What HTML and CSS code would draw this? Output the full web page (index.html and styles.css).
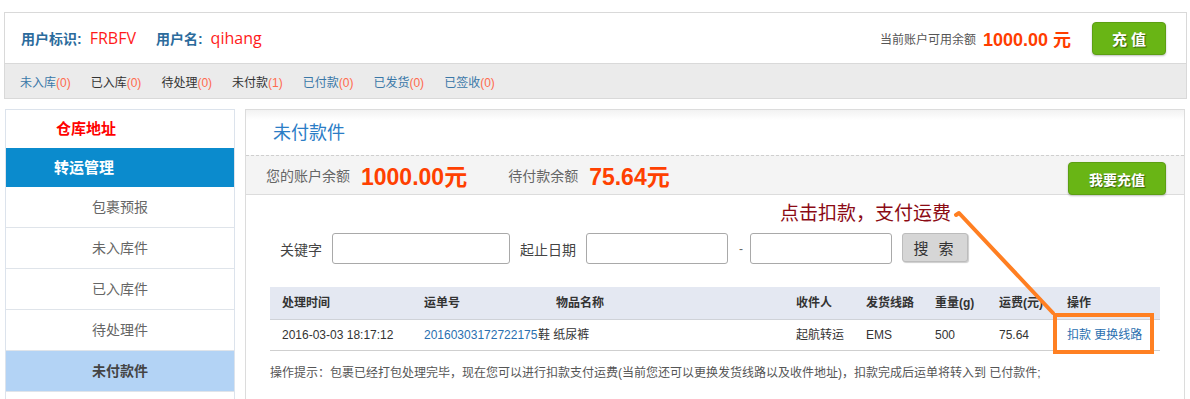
FILE: index.html
```html
<!DOCTYPE html>
<html lang="zh-CN">
<head>
<meta charset="utf-8">
<title>未付款件</title>
<link rel="stylesheet" href="styles.css">
</head>
<body>
<div class="top">
  <div class="top-row">
    <div class="user">
      <span class="lbl">用户标识:</span><span class="val">FRBFV</span>
      <span class="lbl lbl2">用户名:</span><span class="val">qihang</span>
    </div>
    <div class="balance">
      <span class="bal-lbl">当前账户可用余额</span>
      <span class="bal-amt">1000.00 元</span>
      <a class="btn-green btn-top">充 值</a>
    </div>
  </div>
  <div class="nav">
    <a class="nv blue">未入库<span class="cnt">(0)</span></a>
    <a class="nv">已入库<span class="cnt">(0)</span></a>
    <a class="nv">待处理<span class="cnt">(0)</span></a>
    <a class="nv">未付款<span class="cnt">(1)</span></a>
    <a class="nv blue">已付款<span class="cnt">(0)</span></a>
    <a class="nv blue">已发货<span class="cnt">(0)</span></a>
    <a class="nv blue">已签收<span class="cnt">(0)</span></a>
  </div>
</div>

<div class="content">
  <div class="side">
    <div class="side-title">仓库地址</div>
    <div class="side-head">转运管理</div>
    <div class="side-item">包裹预报</div>
    <div class="side-item">未入库件</div>
    <div class="side-item">已入库件</div>
    <div class="side-item">待处理件</div>
    <div class="side-item active">未付款件</div>
    <div class="side-item">&nbsp;</div>
  </div>

  <div class="main">
    <div class="main-title">未付款件</div>
    <div class="bar">
      <span class="bar-lbl">您的账户余额</span>
      <span class="bar-amt">1000.00元</span>
      <span class="bar-lbl bar-lbl2">待付款余额</span>
      <span class="bar-amt">75.64元</span>
      <a class="btn-green btn-bar">我要充值</a>
    </div>

    <div class="search">
      <span class="s-lbl">关键字</span>
      <span class="inp inp-key"></span>
      <span class="s-lbl">起止日期</span>
      <span class="inp inp-date"></span>
      <span class="dash">-</span>
      <span class="inp inp-date"></span>
      <span class="btn-search">搜 索</span>
    </div>

    <div class="tbl">
      <div class="th">处理时间</div>
      <div class="th">运单号</div>
      <div class="th th-item">物品名称</div>
      <div class="th">收件人</div>
      <div class="th">发货线路</div>
      <div class="th">重量(g)</div>
      <div class="th">运费(元)</div>
      <div class="th">操作</div>

      <div class="td">2016-03-03 18:17:12</div>
      <div class="td link nowrap">20160303172722175</div>
      <div class="td td-item">鞋 纸尿裤</div>
      <div class="td">起航转运</div>
      <div class="td">EMS</div>
      <div class="td">500</div>
      <div class="td">75.64</div>
      <div class="td link">扣款 更换线路</div>
    </div>

    <div class="hint">操作提示：包裹已经打包处理完毕，现在您可以进行扣款支付运费(当前您还可以更换发货线路以及收件地址)，扣款完成后运单将转入到 已付款件;</div>

    <div class="note">点击扣款，支付运费</div>
    <svg class="arrow" width="110" height="110" viewBox="0 0 110 110">
      <path d="M4 6 L7 4 L101 104" fill="none" stroke="#ff7f22" stroke-width="4" stroke-linecap="round" stroke-linejoin="round"/>
    </svg>
    <div class="hl"></div>
  </div>
</div>
</body>
</html>
```

FILE: styles.css
```css
* { box-sizing: border-box; }
body {
  margin: 0;
  background: #fff;
  font-family: "Liberation Sans", "Noto Sans CJK SC", sans-serif;
  font-size: 12px;
  color: #333;
}
a { text-decoration: none; cursor: pointer; }

.top {
  margin: 12px 0 0 4px;
  width: 1183px;
  border: 1px solid #d9d9d9;
}
.top-row {
  height: 50px;
  display: flex;
  align-items: center;
  justify-content: space-between;
  padding: 0 20px 0 16px;
  background: #fff;
}
.user { display: flex; align-items: center; }
.lbl { font-size: 14px; font-weight: bold; color: #2b6b9c; }
.lbl2 { margin-left: 20px; }
.val {
  font-family: "Open Sans", "Liberation Sans", sans-serif;
  font-size: 16px;
  color: #ff1a1a;
  margin-left: 8px;
}
.balance { display: flex; align-items: center; }
.bal-lbl { color: #555; font-size: 12px; }
.bal-amt { color: #ff3d00; font-size: 18px; font-weight: bold; margin-left: 7px; }
.btn-green {
  display: flex;
  align-items: center;
  justify-content: center;
  background: #69b515;
  border: 1px solid #5c9f12;
  border-radius: 4px;
  color: #fff;
  font-weight: bold;
  text-shadow: 1px 1px 1px rgba(0,0,0,0.45);
  box-shadow: 0 1px 2px rgba(0,0,0,0.25);
}
.btn-top { width: 74px; height: 33px; font-size: 15px; margin-left: 21px; }

.nav {
  height: 35px;
  border-top: 1px solid #d9d9d9;
  background: #ebebeb;
  display: flex;
  align-items: center;
  padding-left: 15px;
  gap: 20px;
}
.nv { color: #333; font-size: 12px; }
.nv.blue { color: #3a78a8; }
.cnt { color: #ff6a4d; }

.content {
  display: flex;
  align-items: flex-start;
  margin-top: 10px;
  margin-left: 5px;
}
.side {
  width: 230px;
  border: 1px solid #dce3ec;
  border-bottom: none;
}
.side-title {
  height: 38px;
  line-height: 38px;
  padding-left: 50px;
  font-size: 15px;
  font-weight: bold;
  color: #ff0000;
}
.side-head {
  height: 39px;
  line-height: 39px;
  padding-left: 48px;
  font-size: 15px;
  font-weight: bold;
  color: #fff;
  background: #0b8bcd;
}
.side-item {
  height: 41px;
  line-height: 40px;
  border-bottom: 1px solid #dfe4ea;
  text-align: center;
  font-size: 14px;
  color: #666;
}
.side-item.active {
  background: #b3d3f5;
  color: #444;
  font-weight: bold;
}

.main {
  position: relative;
  margin-left: 10px;
  width: 940px;
  height: 300px;
  border: 1px solid #dcdcdc;
  border-bottom: none;
}
.main-title {
  height: 46px;
  line-height: 46px;
  padding-left: 27px;
  font-size: 18px;
  color: #2b7dc6;
  background: linear-gradient(#f2f2f2, #fff 10px);
  border-bottom: 1px dashed #cfcfcf;
}
.bar {
  height: 39px;
  display: flex;
  align-items: center;
  padding-left: 20px;
  background: #f4f4f4;
  border-bottom: 1px solid #dcdcdc;
  position: relative;
}
.bar-lbl { font-size: 14px; color: #666; }
.bar-lbl2 { margin-left: 41px; }
.bar-amt { font-size: 23px; font-weight: bold; color: #ff4000; margin-left: 11px; }
.btn-bar {
  position: absolute;
  right: 18px;
  bottom: -1px;
  width: 98px;
  height: 33px;
  font-size: 14px;
}

.search {
  display: flex;
  align-items: center;
  margin-top: 38px;
  padding-left: 34px;
  height: 31px;
}
.s-lbl { font-size: 14px; color: #444; margin-right: 10px; }
.inp {
  height: 31px;
  border: 1px solid #a9a9a9;
  border-radius: 3px;
  background: #fff;
  margin-right: 10px;
}
.inp-key { width: 178px; }
.inp-date { width: 142px; }
.dash { color: #666; margin: 0 7px 0 1px; }
.btn-search {
  width: 66px;
  height: 29px;
  display: flex;
  align-items: center;
  justify-content: center;
  background: #d6d6d6;
  border: 1px solid #bcbcbc;
  border-radius: 3px;
  box-shadow: 1px 1px 1px rgba(0,0,0,0.2);
  font-size: 15px;
  color: #333;
  letter-spacing: 3px;
  align-self: flex-start;
}

.tbl {
  margin: 23px 0 0 24px;
  width: 890px;
  display: grid;
  grid-template-columns: 142px 126px 246px 70px 69px 64px 68px 105px;
}
.th {
  height: 33px;
  line-height: 32px;
  background: #e4e8f2;
  border-bottom: 1px solid #cfd2d8;
  padding-left: 12px;
  font-weight: bold;
  color: #333;
}
.th-item { padding-left: 18px; }
.td {
  height: 31px;
  line-height: 30px;
  border-bottom: 1px solid #cfcfcf;
  padding-left: 12px;
  color: #333;
}
.td-item { padding-left: 0; }
.nowrap { white-space: nowrap; }
.link { color: #2a6fb0; }

.hint {
  margin: 12px 0 0 24px;
  line-height: 20px;
  color: #555;
  white-space: nowrap;
}

.note {
  position: absolute;
  left: 534px;
  top: 91px;
  font-size: 19px;
  line-height: 26px;
  color: #8b0a14;
  white-space: nowrap;
}
.arrow {
  position: absolute;
  left: 706px;
  top: 99px;
}
.hl {
  position: absolute;
  left: 807px;
  top: 203px;
  width: 101px;
  height: 41px;
  border: 4px solid #ff8022;
}
```
